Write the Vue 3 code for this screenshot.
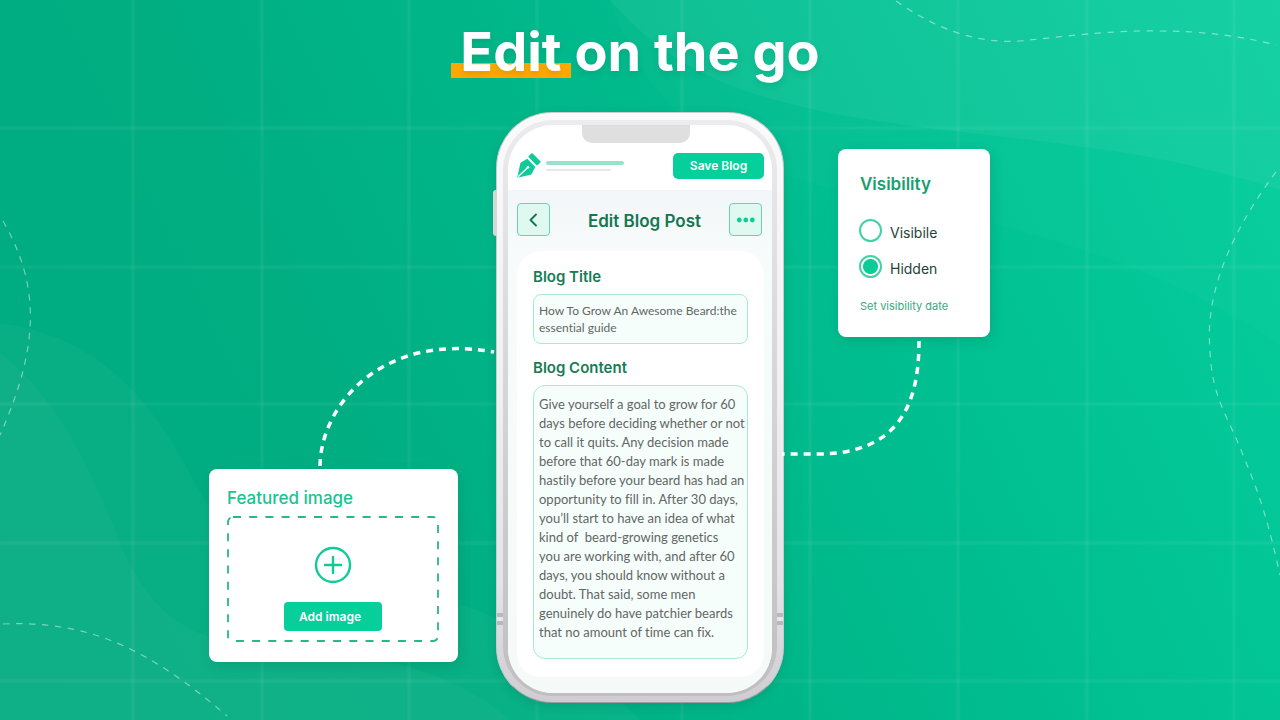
<script setup>
import { ref } from 'vue'

const verticals = [133, 262, 409, 537, 682, 810, 958, 1087, 1234]
const horizontals = [128, 267, 404, 543, 681]

const visibility = ref('hidden')
const blogTitle = ref('How To Grow An Awesome Beard:the\nessential guide')
const blogContent = ref(
  [
    'Give yourself a goal to grow for 60',
    'days before deciding whether or not',
    'to call it quits. Any decision made',
    'before that 60-day mark is made',
    'hastily before your beard has had an',
    'opportunity to fill in. After 30 days,',
    'you’ll start to have an idea of what',
    'kind of  beard-growing genetics',
    'you are working with, and after 60',
    'days, you should know without a',
    'doubt. That said, some men',
    'genuinely do have patchier beards',
    'that no amount of time can fix.',
  ].join('\n')
)
</script>

<template>
  <div class="stage">
    <svg class="backdrop" viewBox="0 0 1280 720" preserveAspectRatio="xMidYMid slice" aria-hidden="true">
      <g fill="#fff">
        <path fill-opacity=".05" d="M610 0C655 50 700 88 840 115C980 140 1130 140 1280 190V0Z" />
        <path fill-opacity=".02" d="M840 190C990 220 1150 255 1280 345V0H610C640 90 700 160 840 190Z" />
        <path fill-opacity=".03" d="M0 323C90 335 145 390 185 465C225 540 250 570 330 580C440 592 530 610 640 720H0Z" />
        <path fill-opacity=".03" d="M0 353C60 400 90 470 115 530C140 600 180 640 250 645C350 652 440 660 510 720H0Z" />
      </g>
      <g stroke="#fff" stroke-opacity=".025" stroke-width="5">
        <line v-for="x in verticals" :key="'v' + x" :x1="x" :x2="x" y1="0" y2="720" />
        <line v-for="y in horizontals" :key="'h' + y" :y1="y" :y2="y" x1="0" x2="1280" />
      </g>
      <g stroke="#fff" stroke-opacity=".035" stroke-width="3">
        <line v-for="x in verticals" :key="'vi' + x" :x1="x" :x2="x" y1="0" y2="720" />
        <line v-for="y in horizontals" :key="'hi' + y" :y1="y" :y2="y" x1="0" x2="1280" />
      </g>
      <g fill="none" stroke="#fff" stroke-opacity=".45" stroke-width="1.2" stroke-dasharray="6.5 6.5">
        <path d="M896 1C935 28 975 44 1020 41C1060 37 1110 30 1160 31C1205 31 1245 37 1276 45" />
        <path d="M1276 172C1240 220 1204 285 1210 350C1212 400 1228 415 1245 460C1262 500 1270 530 1280 575" />
        <path d="M3 221C40 285 40 345 0 435" />
        <path d="M3 624C90 620 150 650 227 716" />
      </g>
    </svg>

    <header class="headline">
      <h1><span class="marked">Edit</span> on the go</h1>
    </header>

    <main class="scene">
      <section class="card featured">
        <svg class="link-left" viewBox="0 0 180 124" width="180" height="124" aria-hidden="true">
          <path d="M4 121C5 58 68 -13 178 7" fill="none" stroke="#fff" stroke-width="3.5" stroke-dasharray="7 6" />
        </svg>
        <h2>Featured image</h2>
        <div class="dropzone">
          <svg class="outline" aria-hidden="true">
            <rect x="1" y="1" width="210" height="124" rx="5" />
          </svg>
          <svg class="plus" viewBox="0 0 38 38" width="38" height="38" aria-hidden="true">
            <circle cx="19" cy="19" r="17" />
            <path d="M19 11v16M11 19h16" />
          </svg>
          <button type="button" class="solid add">Add image</button>
        </div>
      </section>

      <section class="phone">
        <span class="side-key"></span>
        <span class="antenna left"></span>
        <span class="antenna right"></span>
        <div class="bezel">
          <div class="screen">
            <span class="notch"></span>
            <div class="topbar">
              <svg class="pen" viewBox="0 0 24 25" width="24" height="25" aria-hidden="true">
                <path d="M11.700 3L14.300 .6Q15.200 -.1 16 .7L23.300 8.200Q24 9 23.200 9.800L20.600 12.100Q19.900 12.700 19.200 12L11.700 4.300Q11.100 3.600 11.700 3Z" />
                <path d="M10.300 5.800L18.300 14L14.700 20.800Q14.400 21.400 13.700 21.700L1.200 24.600Q.2 24.700 .4 23.700L3.300 10.600Q3.500 9.700 4.300 9.300Z" />
                <path d="M1.600 23.300L11 14.300" fill="none" stroke="#fff" stroke-width="1.400" stroke-linecap="round" />
                <circle cx="11" cy="14.200" r="1.300" fill="#fff" />
              </svg>
              <div class="strokes"><span></span><span></span></div>
              <button type="button" class="solid save">Save Blog</button>
            </div>

            <div class="content">
              <div class="toolbar">
                <button type="button" class="square" aria-label="Back">
                  <svg viewBox="0 0 20 20" width="20" height="20" aria-hidden="true">
                    <path d="M12 4.500L6.500 10L12 15.500" fill="none" stroke="#147350" stroke-width="1.800" stroke-linecap="round" stroke-linejoin="round" />
                  </svg>
                </button>
                <h2>Edit Blog Post</h2>
                <button type="button" class="square" aria-label="More options">
                  <svg viewBox="0 0 20 20" width="20" height="20" aria-hidden="true">
                    <g fill="#0ecb98"><circle cx="3.300" cy="10" r="2.400" /><circle cx="9.800" cy="10" r="2.400" /><circle cx="16.300" cy="10" r="2.400" /></g>
                  </svg>
                </button>
              </div>

              <form class="sheet" @submit.prevent>
                <label for="blog-title">Blog Title</label>
                <textarea id="blog-title" v-model="blogTitle" class="field title-field" rows="2" spellcheck="false"></textarea>
                <label for="blog-content">Blog Content</label>
                <textarea id="blog-content" v-model="blogContent" class="field body-field" rows="13" spellcheck="false"></textarea>
              </form>
            </div>
          </div>
        </div>
      </section>

      <section class="card visibility">
        <h2>Visibility</h2>
        <label class="option"><input v-model="visibility" type="radio" name="visibility" value="visible" /><span>Visibile</span></label>
        <label class="option"><input v-model="visibility" type="radio" name="visibility" value="hidden" /><span>Hidden</span></label>
        <a href="#">Set visibility date</a>
        <svg class="link-right" viewBox="0 0 140 120" width="140" height="120" aria-hidden="true">
          <path d="M137 4C137 60 122 117 36 117H0" fill="none" stroke="#fff" stroke-width="3.500" stroke-dasharray="7 6" />
        </svg>
      </section>
    </main>
  </div>
</template>

<style>
body {
  margin: 0;
}
</style>

<style scoped>
* {
  box-sizing: border-box;
}

.stage {
  position: relative;
  min-height: 100vh;
  overflow: hidden;
  padding-top: 20px;
  background: linear-gradient(65deg, #00ab80 0%, #00ae82 30%, #00bc8e 62%, #05cf9f 100%);
  font-family: Inter, "Liberation Sans", sans-serif;
}

.backdrop {
  position: absolute;
  inset: 0;
  width: 100%;
  height: 100%;
}

h1,
h2 {
  margin: 0;
}

.headline {
  position: relative;
  text-align: center;
}

h1 {
  color: #fff;
  font-size: 54px;
  line-height: 64px;
  font-weight: 700;
  text-shadow: 0 3px 6px rgba(0, 80, 55, 0.14);
}

.marked {
  margin: 0 -9px;
  padding: 0 9px;
  background: linear-gradient(#ffa800, #ffa800) 0 calc(100% - 6px) / 100% 15px no-repeat;
}

.scene {
  position: relative;
  display: grid;
  grid-template-columns: 1fr 288px 1fr;
  margin-top: 28px;
  align-items: start;
}

.card {
  position: relative;
  border-radius: 8px;
  background: #fff;
  box-shadow: 2px 4px 12px rgba(0, 90, 60, 0.18);
}

.featured {
  justify-self: end;
  align-self: end;
  width: 249px;
  margin: 0 38px 41px 0;
  padding: 18px 18px 20px;
}

.featured h2 {
  color: #16c591;
  font-size: 17px;
  line-height: 22px;
  font-weight: 500;
}

.link-left {
  position: absolute;
  left: 107px;
  bottom: 100%;
}

.dropzone {
  position: relative;
  display: flex;
  flex-direction: column;
  align-items: center;
  width: 212px;
  height: 126px;
  margin-top: 7px;
  padding-top: 30px;
  gap: 18px;
}

.outline {
  position: absolute;
  inset: 0;
  width: 100%;
  height: 100%;
  fill: none;
  stroke: #25b98a;
  stroke-width: 1.8;
  stroke-dasharray: 8 8.2;
}

.plus {
  fill: none;
  stroke: #0fcb97;
  stroke-width: 2.4;
  stroke-linecap: round;
}

.solid {
  border: 0;
  border-radius: 5px;
  background: #06cf9c;
  color: #fff;
  font-family: inherit;
  font-weight: 600;
  padding: 0;
}

.add {
  position: relative;
  width: 98px;
  height: 29px;
  border-radius: 4px;
  padding-right: 6px;
  font-size: 12px;
}

.phone {
  position: relative;
  height: 591px;
  padding: 7px 6px 6px;
  border: 1px solid #c9ccce;
  border-bottom-color: #9d9c9f;
  border-radius: 56px;
  background: linear-gradient(#fafafb, #f1f1f3 45%, #e4e3e7 80%, #cfcdd2);
  box-shadow: 0 3px 10px rgba(0, 70, 50, 0.16);
}

.side-key {
  position: absolute;
  left: -4px;
  top: 77px;
  width: 4px;
  height: 46px;
  border-radius: 3px 0 0 3px;
  background: #d6d5d8;
}

.antenna {
  position: absolute;
  top: 500px;
  width: 11px;
  height: 12px;
  border-top: 4px solid #b9b8bb;
  border-bottom: 4px solid #b9b8bb;
  background: #e6e5e8;
}

.antenna.left {
  left: 0;
}

.antenna.right {
  right: 0;
}

.bezel {
  position: relative;
  height: 100%;
  padding: 5px 5px 3px;
  border-radius: 50px;
  background: linear-gradient(#ececee, #d8d8da 40%, #bfbfc1);
}

.screen {
  position: relative;
  display: flex;
  flex-direction: column;
  height: 100%;
  overflow: hidden;
  border-radius: 45px;
  background: #fff;
}

.notch {
  position: absolute;
  top: 0;
  left: 50%;
  width: 108px;
  height: 18px;
  margin-left: -58px;
  border-radius: 0 0 10px 10px;
  background: #dfdfdf;
}

.topbar {
  display: flex;
  align-items: center;
  height: 66px;
  padding: 16px 8px 0 9px;
}

.pen {
  fill: #0ecb98;
}

.strokes {
  display: flex;
  flex: 1;
  flex-direction: column;
  gap: 4px;
  padding-left: 5px;
}

.strokes span {
  width: 78px;
  height: 4px;
  border-radius: 2px;
  background: #96e3cb;
}

.strokes span + span {
  width: 65px;
  height: 2px;
  background: #e6e8e8;
}

.save {
  width: 91px;
  height: 26px;
  font-size: 12px;
}

.content {
  flex: 1;
  padding: 13px 8px 16px 9px;
  background: linear-gradient(#f2f6f8, #f7fbfb 60px, #f5faf9);
}

.toolbar {
  display: flex;
  align-items: center;
  justify-content: space-between;
  padding-right: 2px;
}

.toolbar h2 {
  padding: 3px 0 0 10px;
  color: #147650;
  font-size: 17px;
  line-height: 22px;
  font-weight: 600;
}

.square {
  display: grid;
  place-items: center;
  width: 33px;
  height: 33px;
  padding: 0;
  border: 1px solid #63d6b0;
  border-radius: 4px;
  background: #dff9f0;
}

.sheet {
  display: flex;
  flex-direction: column;
  height: 426px;
  margin-top: 15px;
  padding: 16px 16px 18px;
  border-radius: 24px;
  background: #fff;
}

.sheet label {
  color: #177c56;
  font-size: 15px;
  line-height: 20px;
  font-weight: 600;
}

.field {
  display: block;
  width: 100%;
  padding: 7px 0 0 5px;
  border: 1px solid #a5ebd4;
  outline: 0;
  resize: none;
  overflow: hidden;
  background: #f6fefb;
  color: #626664;
  font-family: Lato, Inter, sans-serif;
  font-size: 13px;
  font-variant-ligatures: none;
  white-space: pre;
}

.title-field {
  height: 50px;
  margin: 7px 0 14px;
  border-radius: 8px;
  font-size: 12px;
  line-height: 17px;
}

.body-field {
  flex: 1;
  margin-top: 7px;
  padding-top: 9px;
  border-radius: 12px;
  line-height: 19px;
}

.visibility {
  justify-self: start;
  width: 152px;
  height: 188px;
  margin: 37px 0 0 54px;
  padding: 24px 21px;
}

.visibility h2 {
  margin: 0 0 24px 1px;
  color: #1a9e70;
  font-size: 17px;
  line-height: 22px;
  font-weight: 600;
}

.option {
  display: flex;
  align-items: center;
  gap: 8px;
  height: 23px;
  margin-bottom: 13px;
  color: #1f4437;
  font-size: 14px;
}

.option span {
  padding-top: 4px;
}

.option input {
  appearance: none;
  width: 23px;
  height: 23px;
  margin: 0;
  border: 2px solid #43d0a5;
  border-radius: 50%;
  background: #fff;
}

.option input:checked {
  background: radial-gradient(circle, #0bcb98 0 7px, #fff 8px);
}

.visibility a {
  display: block;
  margin: 20px 0 0 1px;
  color: #38a882;
  font-size: 11px;
  line-height: 16px;
  text-decoration: none;
  white-space: nowrap;
}

.link-right {
  position: absolute;
  right: 68px;
  top: 100%;
}
</style>
